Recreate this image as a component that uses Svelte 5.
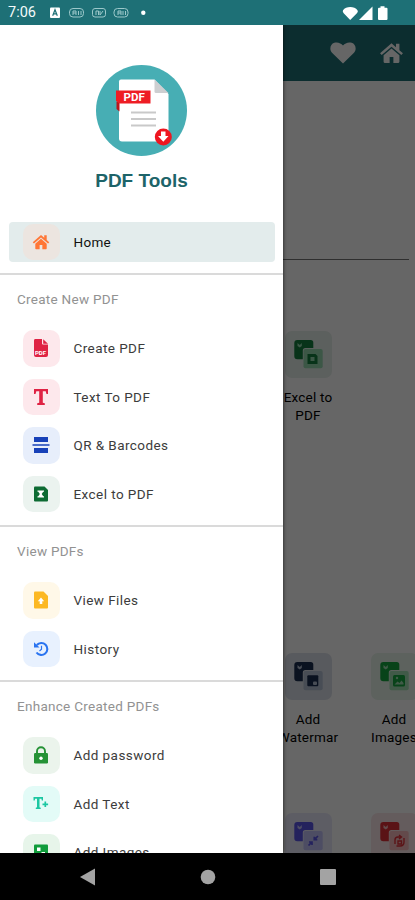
<script>
  const sections = [
    {
      title: "Create New PDF",
      items: [
        { label: "Create PDF", icon: "pdf", color: "#df2344", tint: "#fde8ec" },
        { label: "Text To PDF", icon: "text", color: "#df2344", tint: "#fde8ec" },
        { label: "QR & Barcodes", icon: "barcode", color: "#1741b8", tint: "#e7eefb" },
        { label: "Excel to PDF", icon: "excel", color: "#0d6b33", tint: "#ebf3ef" },
      ],
    },
    {
      title: "View PDFs",
      items: [
        { label: "View Files", icon: "file", color: "#fcb823", tint: "#fff8e8" },
        { label: "History", icon: "history", color: "#2a74f0", tint: "#e8f1fe" },
      ],
    },
    {
      title: "Enhance Created PDFs",
      items: [
        { label: "Add password", icon: "lock", color: "#259236", tint: "#ebf4ec" },
        { label: "Add Text", icon: "addText", color: "#1cc7a2", tint: "#e3fbf7" },
        { label: "Add Images", icon: "image", color: "#109c3b", tint: "#e7f5ea" },
      ],
    },
  ];

  const toolRows = [
    [{ lines: ["Excel to", "PDF"], icon: "excel", column: 4, color: "#15803f", light: "#96d9b0", tint: "#e6efea" }],
    [
      { lines: ["Add", "Watermar"], icon: "stamp", column: 4, color: "#1b2d50", light: "#b4c0d4", tint: "#dde2ea" },
      { lines: ["Add", "Images"], icon: "image", column: 5, color: "#16a840", light: "#a2e2b4", tint: "#e8f4ea" },
    ],
    [
      { lines: [], icon: "compress", column: 4, color: "#5a55e8", light: "#c1c0f7", tint: "#e9e8fb" },
      { lines: [], icon: "merge", column: 5, color: "#e23038", light: "#f7b9bb", tint: "#fbe7e8" },
    ],
  ];
</script>

{#snippet house()}
  <path
    d="M12 3.2 1 12.8l1.6 1.7L12 6.4l9.4 8.1 1.6-1.7-3.4-3V3.6h-3.3v3.3z"
    fill="currentColor"
  />
  <path d="m12 8.2-7.6 6.5V21q0 1 1 1h4.8v-5.6h3.6V22h4.8q1 0 1-1v-6.3z" fill="currentColor" />
{/snippet}

<div class="screen">
  <header class="status-bar">
    <span class="time">7:06</span>
    <svg class="status-left" viewBox="0 0 100 14">
      <rect x="1" y="1.5" width="10" height="10.5" rx="1" fill="#fff" />
      <path d="m3.7 9.7 2.3-6 2.3 6M4.5 7.8h3" fill="none" stroke="#1e7076" stroke-width="1.2" />
      <g fill="none" stroke="#9cc8ca" stroke-width="1">
        <rect x="20.5" y="2.5" width="14" height="8.5" rx="3.5" />
        <rect x="43.5" y="2.5" width="13" height="8.5" rx="2.5" />
        <rect x="65" y="2.5" width="14" height="8.5" rx="3.5" />
        <path d="M24 9V5h3v4M24 7h3M29.5 5v4M32 5v4M47 9V5h2.5v4M51 5v4l3-4M69 9V5h3v4M69 7h3M74 5v4M76.5 5v4" />
      </g>
      <circle cx="94.3" cy="6.8" r="2.2" fill="#fff" />
    </svg>
    <svg class="status-right" viewBox="0 0 48 16">
      <path d="M1 5.3C4 1 12.5 1 15.5 5.3q1 1.5-.6 3L8.2 15 1.7 8.3Q.3 6.8 1 5.3z" fill="#fff" />
      <path d="M30.5 1.5V15H17z" fill="#fff" />
      <path d="M38.5 1.3h4v1.5h2q1 0 1 1V14q0 1-1 1h-7.5q-1 0-1-1V3.8q0-1 1-1h1.5z" fill="#fff" />
    </svg>
  </header>

  <main>
    <div class="page">
      <div class="app-bar">
        <svg class="heart" viewBox="0 0 26 22">
          <path
            d="M13 21.5 2 10.8C-1 7.5.3 2 4.3.8 7.8-.3 11 1.3 13 3.5 15 1.3 18.2-.3 21.7.8c4 1.2 5.3 6.7 2.3 10z"
            fill="currentColor"
          />
        </svg>
        <svg class="home" viewBox="0 2 24 21">{@render house()}</svg>
      </div>
      <div class="search-line"></div>
      {#each toolRows as row}
        <div class="tool-row">
          {#each row as tool}
            <div class="tool" style="grid-column: {tool.column}">
              <svg class="tool-icon" viewBox="0 0 47 47">
                <rect width="47" height="47" rx="7" fill={tool.tint} />
                <path
                  d="M12.3 9h13.5q2.5 0 2.5 2.5V17h-8q-2.5 0-2.5 2.5v8.8h-5.5q-3 0-3-3V12q0-3 3-3z"
                  fill={tool.color}
                />
                <path d="M12.5 12v3l2.3 1.5 2-1.5v-3l-2 2z" fill={tool.light} />
                <rect x="18.5" y="18" width="19.2" height="19.3" rx="2" fill={tool.light} />
                {#if tool.icon === "excel"}
                  <path d="M22.5 23h8l2 2v8h-10z" fill={tool.color} />
                  <path d="M25.5 26h4v4h-4z" fill={tool.light} />
                {:else if tool.icon === "stamp"}
                  <rect x="22.3" y="22.3" width="11" height="11" rx="1" fill={tool.color} />
                  <rect x="28" y="28.5" width="4" height="3.5" rx="1" fill={tool.light} />
                {:else if tool.icon === "image"}
                  <rect x="22" y="22" width="12" height="11.5" rx="1.5" fill={tool.color} />
                  <path d="m23.5 31.5 3-3 2 1.5 2-2.5 2 2.5v1.5z" fill={tool.light} />
                  <circle cx="26" cy="25" r="1.2" fill={tool.light} />
                {:else if tool.icon === "compress"}
                  <path
                    d="m23.5 32.5 3.5-3.5m0 3v-3h-3M33 23l-3.7 3.7m0-3v3h3"
                    fill="none"
                    stroke={tool.color}
                    stroke-width="1.7"
                  />
                {:else}
                  <path
                    d="M24 31v-4q0-3 3-3h3m-2-2 2.5 2-2.5 2M33 25v4q0 4-4 4h-3.5M27 28h3.5v3H27z"
                    fill="none"
                    stroke={tool.color}
                    stroke-width="1.4"
                  />
                {/if}
              </svg>
              {#if tool.lines.length}
                <span class="tool-name">
                  {#each tool.lines as line}
                    <span>{line}</span>
                  {/each}
                </span>
              {/if}
            </div>
          {/each}
        </div>
      {/each}
    </div>

    <div class="scrim"></div>

    <aside class="drawer">
      <div class="brand">
        <svg class="logo" viewBox="0 0 91 91">
          <circle cx="45.5" cy="45.5" r="45.5" fill="#47aeb4" />
          <path d="M25 14.5h33.5L72.5 29v47.5H26q-3 0-3-3v-57q0-2 2-2z" fill="#fff" />
          <path d="M58.5 14.5 72.5 28H60q-1.5 0-1.5-1.5z" fill="#cdcfd1" />
          <path d="M20.5 37h3v9.5l-3-2.5z" fill="#b9151c" />
          <path d="M20 25.5h34.5v13H23.5L20 36z" fill="#ee1d24" />
          <text x="27.5" y="36" class="logo-text">PDF</text>
          <path d="M35 47.5h25M35 54h25M35 60.5h25" stroke="#c9c9c9" stroke-width="2" />
          <circle cx="67.3" cy="72" r="8.5" fill="#ee1620" />
          <path d="M65 66.5h4.5v4.5h3l-5.2 5.8-5.3-5.8h3z" fill="#fff" />
        </svg>
        <h1>PDF Tools</h1>
      </div>

      <div class="item active">
        <span class="tile home-tile">
          <svg viewBox="0 2 24 21">{@render house()}</svg>
        </span>
        <span class="label">Home</span>
      </div>

      {#each sections as section}
        <section>
          <h2>{section.title}</h2>
          {#each section.items as item}
            <div class="item">
              <span class="tile" style="background-color: {item.tint}; color: {item.color}">
                <svg viewBox="0 0 18 18">
                  {#if item.icon === "pdf"}
                    <path d="M3 0h7v4.5q0 1 1 1h5V16q0 2-2 2H4q-2 0-2-2V1.5Q2 0 3 0z" fill="currentColor" />
                    <path d="M11.2.2 16 4.7h-4.8z" fill="currentColor" />
                    <text x="3" y="16.2" class="pdf-text">PDF</text>
                  {:else if item.icon === "text"}
                    <path
                      d="M2 1h14v5h-1.5l-.8-2.7H10.8v11.4l2 .6V17H5.2v-1.7l2-.6V3.3H4.3L3.5 6H2z"
                      fill="currentColor"
                    />
                  {:else if item.icon === "barcode"}
                    <path d="M2 1h14v5H2zM.5 8.3h17v1.5H.5zM2 12h14v5H2z" fill="currentColor" />
                  {:else if item.icon === "excel"}
                    <path d="M3 1.5h9.5L16 5v10.5q0 1-1 1H3q-1 0-1-1v-13q0-1 1-1z" fill="currentColor" />
                    <path d="M5.5 5.5h6.5v1.3h-.8L9.7 9l1.5 2.3h.8v1.3H5.500v-1.3h.8L7.8 9 6.300 6.8h-.8z" fill="#fff" />
                  {:else if item.icon === "file"}
                    <path d="M3 .5h8.5L16 5v11.5q0 1-1 1H3q-1 0-1-1v-15q0-1 1-1z" fill="currentColor" />
                    <path d="m9 6.5 3.2 3.7h-1.9V13H7.7v-2.8H5.8z" fill="#fff" />
                  {:else if item.icon === "history"}
                    <path d="M4.5 12.5A6 6 0 1 0 4.8 5" fill="none" stroke="currentColor" stroke-width="2.1" />
                    <path d="M2 2.2v5.3h5.5z" fill="currentColor" />
                    <path d="M9.5 5.8v3.5L7.5 11" fill="none" stroke="currentColor" stroke-width="1.2" />
                  {:else if item.icon === "lock"}
                    <path d="M5 8V5.2a4 4 0 0 1 8 0V8" fill="none" stroke="currentColor" stroke-width="1.9" />
                    <rect x="2" y="7" width="14" height="10.5" rx="1.2" fill="currentColor" />
                    <circle cx="9" cy="12.2" r="1.7" fill="#fff" />
                  {:else if item.icon === "addText"}
                    <path
                      d="M1.5 2H11v3.5H9.8l-.4-1.700H7.5v8.5l1.2.4V14H3.8v-1.3l1.2-.4V3.8H3.1l-.4 1.7H1.5z"
                      fill="currentColor"
                    />
                    <path d="M13.3 6.5v5.6M10.500 9.300h5.600" stroke="currentColor" stroke-width="1.7" />
                  {:else if item.icon === "image"}
                    <rect x="2" y="1.5" width="14" height="15" rx="1" fill="currentColor" />
                    <rect x="5" y="4.5" width="3.5" height="3.5" fill="#fff" />
                    <path d="M9.5 9H13v5H5l4.500-3z" fill="#fff" />
                  {/if}
                </svg>
              </span>
              <span class="label">{item.label}</span>
            </div>
          {/each}
        </section>
      {/each}
    </aside>
  </main>

  <nav class="system-nav">
    <svg viewBox="0 0 18 18"><path d="M16 .5v17L1 9z" fill="#a3a3a3" /></svg>
    <svg viewBox="0 0 18 18"><circle cx="9" cy="9" r="7.3" fill="#a3a3a3" /></svg>
    <svg viewBox="0 0 18 18"><rect x="1" y="1" width="16" height="16" rx="1" fill="#a3a3a3" /></svg>
  </nav>
</div>

<style>
  :global(body) {
    margin: 0;
  }

  .screen {
    display: flex;
    flex-direction: column;
    width: 415px;
    height: 900px;
    overflow: hidden;
    background-color: #000;
    font-family: Roboto, "Liberation Sans", sans-serif;
  }

  .status-bar {
    display: flex;
    align-items: center;
    height: 25px;
    box-sizing: border-box;
    padding: 1px 25px 0 8px;
    background-color: #1e7076;
  }

  .time {
    width: 41px;
    color: #f3fafa;
    font-size: 14.5px;
    line-height: 24px;
  }

  .status-left {
    width: 100px;
    height: 14px;
  }

  .status-right {
    width: 48px;
    height: 16px;
    margin-left: auto;
  }

  main {
    position: relative;
    height: 828px;
    overflow: hidden;
  }

  .page {
    height: 100%;
    background-color: #fff;
  }

  .app-bar {
    display: flex;
    align-items: center;
    justify-content: flex-end;
    gap: 23px;
    height: 56px;
    padding-right: 11.5px;
    background-color: #1e7076;
    color: #fff;
  }

  .heart {
    width: 26px;
    height: 22px;
  }

  .home {
    width: 25px;
    height: 22px;
  }

  .search-line {
    height: 1px;
    margin: 178px 6px 71px;
    background-color: #777;
  }

  .tool-row {
    display: grid;
    grid-template-columns: repeat(5, 86px);
    height: 160px;
    margin-left: 7px;
  }

  .tool-row:nth-child(3) {
    height: 322px;
  }

  .tool {
    display: flex;
    flex-direction: column;
    align-items: center;
    gap: 11px;
  }

  .tool-icon {
    width: 47px;
    height: 47px;
    flex: none;
  }

  .tool-name {
    display: flex;
    flex-direction: column;
    align-items: center;
    color: #000;
    font-size: 13.5px;
    line-height: 17.5px;
    letter-spacing: 0.2px;
  }

  .scrim {
    position: absolute;
    inset: 0;
    background-color: rgba(0, 0, 0, 0.6);
  }

  .drawer {
    position: absolute;
    top: 0;
    bottom: 0;
    left: 0;
    width: 283px;
    overflow: hidden;
    background-color: #fff;
    box-shadow: 0 0 4px rgba(0, 0, 0, 0.7);
  }

  .brand {
    display: flex;
    flex-direction: column;
    align-items: center;
    height: 157px;
    padding-top: 40px;
  }

  .logo {
    width: 91px;
    height: 91px;
  }

  .logo-text {
    fill: #fff;
    font-size: 11.5px;
    font-weight: 700;
  }

  .pdf-text {
    fill: #fff;
    font-size: 6px;
    font-weight: 700;
  }

  h1 {
    margin: 13px 0 0;
    color: #1d6469;
    font-family: "Liberation Sans", Arial, sans-serif;
    font-size: 19px;
    font-weight: 700;
    line-height: 24px;
  }

  .item {
    display: flex;
    align-items: center;
    gap: 14px;
    height: 48.5px;
    padding-left: 23px;
  }

  .item.active {
    height: 40px;
    margin: 0 8px 11px 9px;
    padding-left: 14px;
    border-radius: 4px;
    background-color: #e3ecec;
  }

  .tile {
    display: flex;
    align-items: center;
    justify-content: center;
    width: 36.5px;
    height: 36.5px;
    border-radius: 10px;
  }

  .tile svg {
    width: 18px;
    height: 18px;
  }

  .home-tile {
    background-color: #ece5e0;
    color: #ff7636;
  }

  .label {
    color: #3c3c3c;
    font-size: 13.5px;
    letter-spacing: 0.43px;
  }

  .active .label {
    color: #111;
    letter-spacing: 0.3px;
  }

  section {
    padding-bottom: 7px;
    border-top: 2px solid #dadada;
  }

  h2 {
    margin: 0;
    padding-left: 17px;
    color: #929292;
    font-size: 13.5px;
    font-weight: 400;
    line-height: 49px;
    letter-spacing: 0.28px;
  }

  .system-nav {
    display: flex;
    align-items: center;
    justify-content: center;
    gap: 102px;
    height: 47px;
  }

  .system-nav svg {
    width: 18px;
    height: 18px;
  }
</style>
